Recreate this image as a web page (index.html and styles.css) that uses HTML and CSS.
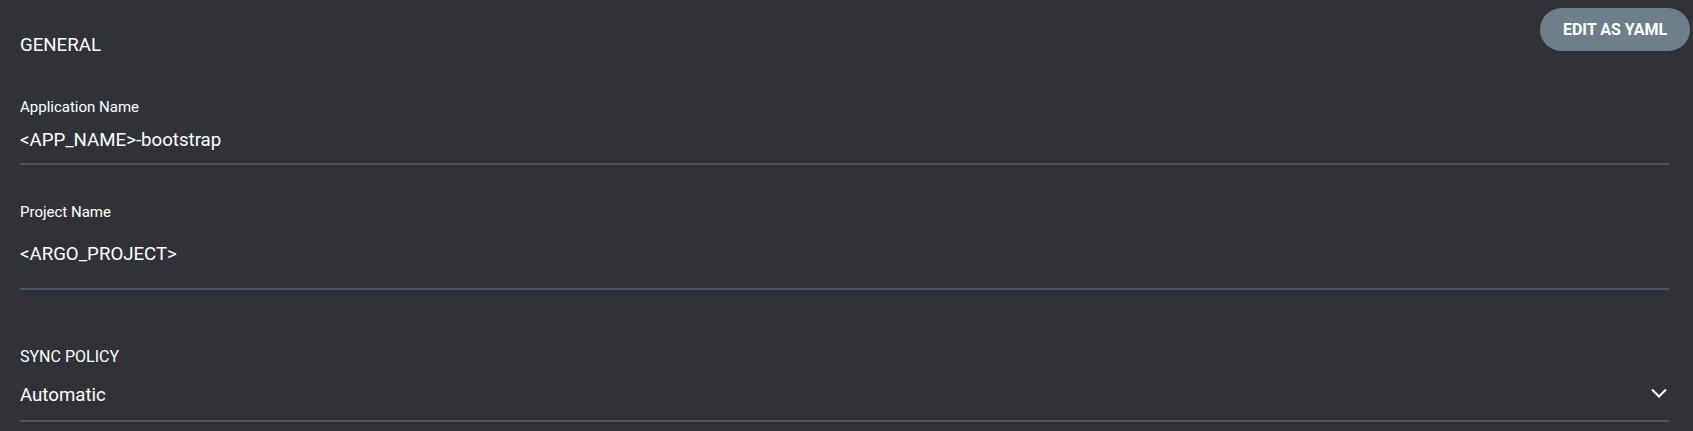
FILE: index.html
```html
<!DOCTYPE html>
<html>
<head>
<meta charset="utf-8">
<link rel="stylesheet" href="styles.css">
</head>
<body>
<div class="page">
  <div class="header">
    <div class="section-title">GENERAL</div>
    <button class="btn">EDIT AS YAML</button>
  </div>
  <div class="field field-app">
    <div class="label">Application Name</div>
    <div class="input input-app">&lt;APP_NAME&gt;-bootstrap</div>
  </div>
  <div class="field field-project">
    <div class="label">Project Name</div>
    <div class="input input-project">&lt;ARGO_PROJECT&gt;</div>
  </div>
  <div class="section-title sync-title">SYNC POLICY</div>
  <div class="select">
    <span class="select-value">Automatic</span>
    <svg class="chevron" width="16" height="10" viewBox="0 0 16 10"><polyline points="1,1.5 8,8.5 15,1.5" fill="none" stroke="#ffffff" stroke-width="2"/></svg>
  </div>
</div>
</body>
</html>
```
FILE: styles.css
```css
html, body {
  margin: 0;
  padding: 0;
  background: #313238;
}
body {
  font-family: Roboto, "Liberation Sans", Arial, sans-serif;
  color: #ffffff;
}
.page {
  padding: 0 24px 0 20px;
}
.header {
  display: flex;
  justify-content: space-between;
  align-items: flex-start;
  margin-right: -21px;
}
.section-title {
  font-size: 18.67px;
  line-height: 21px;
  margin-top: 35px;
}
.btn {
  margin-top: 8px;
  width: 150px;
  height: 43px;
  border: none;
  border-radius: 22px;
  background: #6d7f8b;
  color: #ffffff;
  font-family: Roboto, "Liberation Sans", Arial, sans-serif;
  font-weight: 700;
  font-size: 16px;
  padding: 0;
}
.label {
  font-size: 15px;
  line-height: 18px;
}
.input {
  font-size: 18.67px;
  line-height: 21px;
  border-bottom: 2px solid #4b5661;
}
.field-app {
  margin-top: 42px;
}
.input-app {
  padding: 14px 0 12px;
}
.field-project {
  margin-top: 38px;
}
.input-project {
  padding: 23px 0 23px;
}
.sync-title {
  font-size: 16px;
  line-height: 19px;
  margin-top: 57px;
}
.select {
  display: flex;
  justify-content: space-between;
  align-items: center;
  padding: 19px 2px 14px 0;
  font-size: 18.67px;
  line-height: 21px;
  border-bottom: 2px solid #4b5661;
}
.chevron {
  display: block;
  margin-top: -6px;
}
```
